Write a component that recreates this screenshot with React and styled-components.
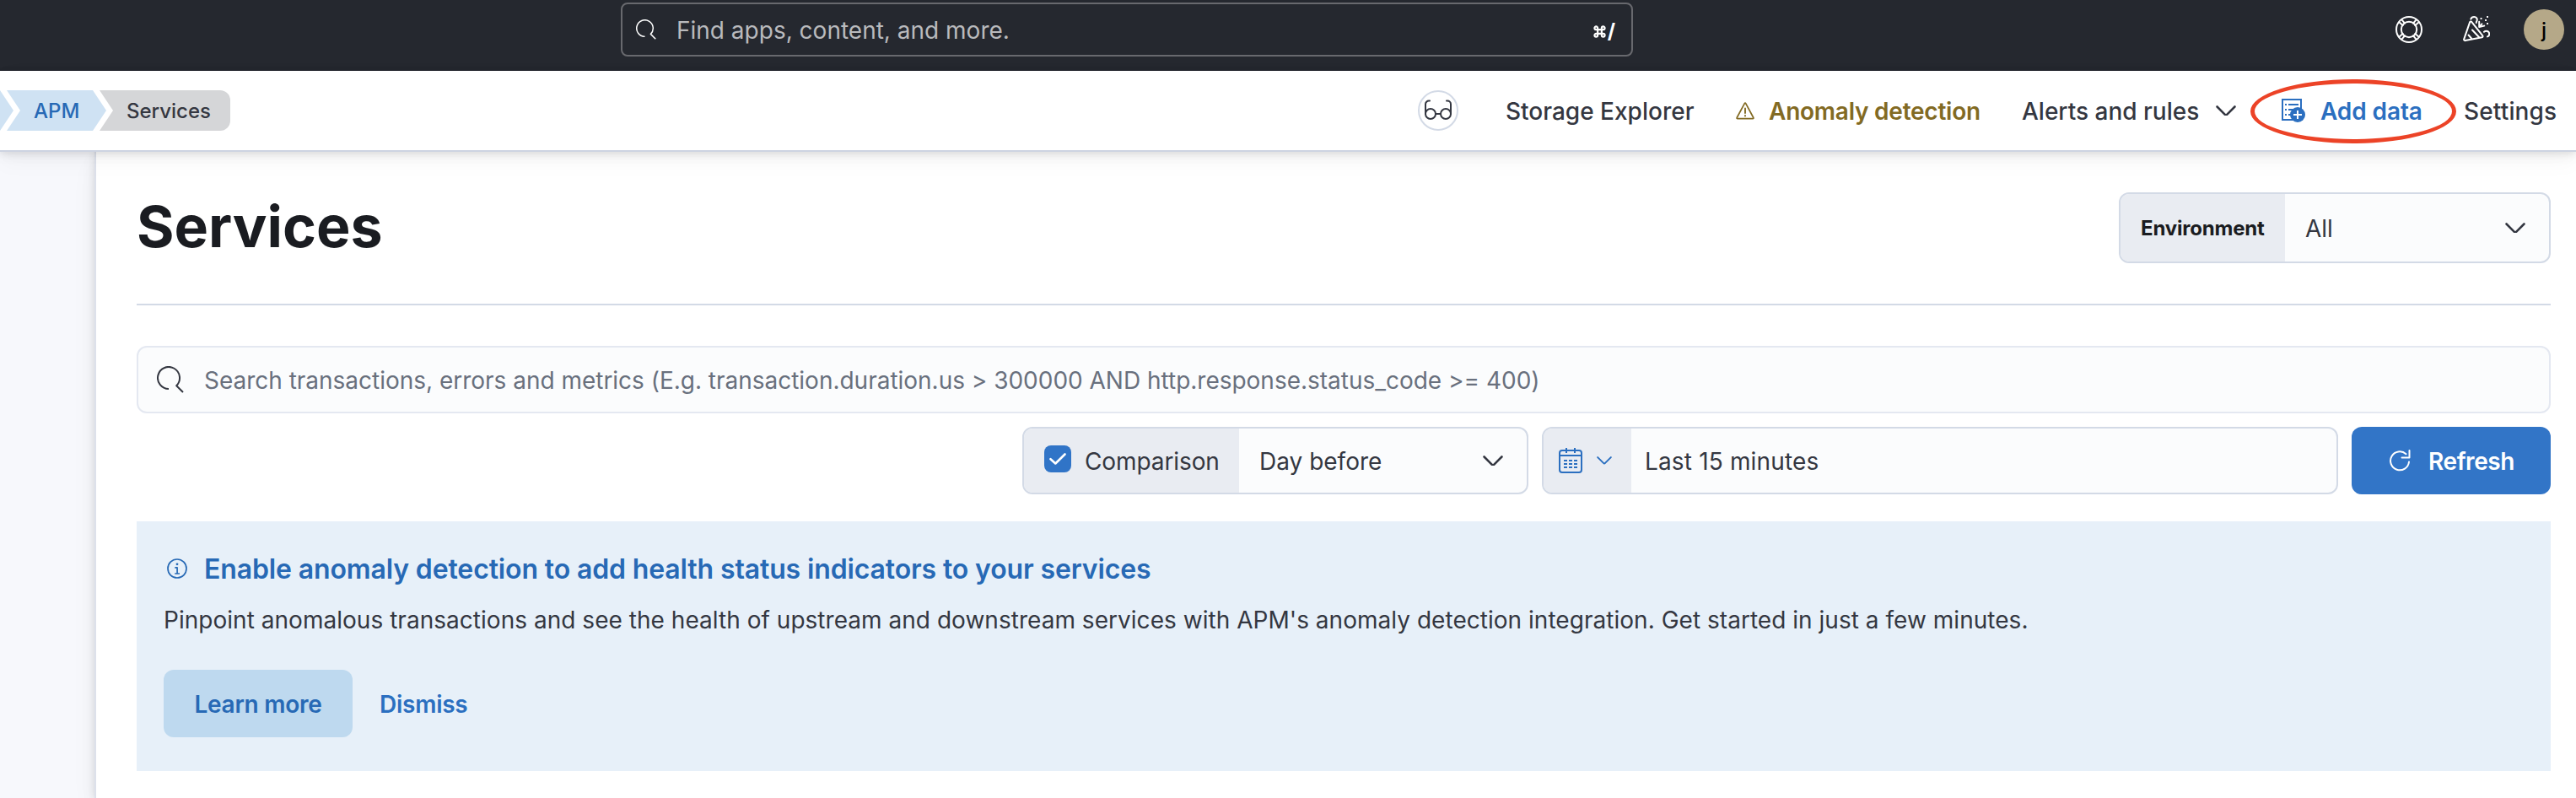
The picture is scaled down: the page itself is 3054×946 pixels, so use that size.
import React from 'react';
import styled, { createGlobalStyle } from 'styled-components';

const GlobalStyle = createGlobalStyle`
  *, *::before, *::after { box-sizing: border-box; }
  body {
    margin: 0;
    background: #fff;
    color: #343741;
    font-family: Inter, "Liberation Sans", sans-serif;
    font-size: 28px;
    line-height: 40px;
    overflow: hidden;
  }
`;

const Page = styled.div`
  display: flex;
  flex-direction: column;
  width: 3054px;
  height: 946px;
  overflow: hidden;
`;

const Label = styled.span`
  display: block;
  padding-top: 2px;
  letter-spacing: ${(p) => p.$ls || 0}px;
  white-space: nowrap;
`;

const TopBar = styled.header`
  flex: none;
  display: flex;
  align-items: flex-start;
  height: 84px;
  padding: 3px 14px 0 736px;
  background: #25282f;
`;

const GlobalSearch = styled.div`
  display: flex;
  align-items: center;
  width: 1200px;
  height: 64px;
  padding: 0 19px 0 16px;
  border: 2px solid #68696e;
  border-radius: 8px;
  color: #fff;
`;

const GlobalSearchText = styled(Label)`
  flex: 1;
  margin-left: 24px;
  color: #b9babd;
`;

const Shortcut = styled.kbd`
  display: flex;
  align-items: center;
  gap: 2px;
  font-family: Inter, sans-serif;
  font-size: 24px;
  font-weight: 700;
  line-height: 32px;
  margin-top: 4px;
`;

const TopActions = styled.div`
  display: flex;
  align-items: center;
  gap: 48px;
  height: 64px;
  margin-left: auto;
  color: #fff;
`;

const Avatar = styled.div`
  display: flex;
  align-items: center;
  justify-content: center;
  width: 48px;
  height: 48px;
  margin-left: -8px;
  border-radius: 50%;
  background: #b5a888;
  color: #000;
  font-size: 24px;
  font-weight: 500;
`;

const NavBar = styled.nav`
  position: relative;
  z-index: 2;
  flex: none;
  display: flex;
  align-items: center;
  justify-content: space-between;
  height: 96px;
  padding: 0 23px 0 0;
  background: #fff;
  border-bottom: 2px solid #cdd3e1;
  box-shadow: 0 2px 8px rgba(0, 0, 0, 0.08), 0 5px 14px rgba(0, 0, 0, 0.05), 0 10px 28px rgba(0, 0, 0, 0.04);
`;

const Crumbs = styled.div`
  display: flex;
`;

const Crumb = styled.div`
  display: flex;
  align-items: center;
  width: ${(p) => p.$width}px;
  height: 48px;
  margin-left: ${(p) => (p.$first ? 0 : -8)}px;
  padding-left: ${(p) => (p.$first ? 0 : 32)}px;
  background: ${(p) => (p.$last ? '#d5d6d8' : '#cfe2f3')};
  color: ${(p) => (p.$last ? '#343741' : '#2769b5')};
  border-radius: ${(p) => (p.$last ? '0 12px 12px 0' : 0)};
  clip-path: ${(p) =>
    p.$first
      ? 'polygon(0 0, 100% 50%, 0 100%)'
      : p.$last
        ? 'polygon(0 0, 100% 0, 100% 100%, 0 100%, 16px 50%)'
        : 'polygon(0 0, calc(100% - 16px) 0, 100% 50%, calc(100% - 16px) 100%, 0 100%, 16px 50%)'};
  font-size: 24px;
  font-weight: 500;
`;

const NavLinks = styled.div`
  display: flex;
  align-items: center;
`;

const ReadOnlyBadge = styled.div`
  display: flex;
  align-items: center;
  justify-content: center;
  width: 48px;
  height: 48px;
  margin-right: 56px;
  border: 2px solid #d3dae6;
  border-radius: 50%;
`;

const NavLink = styled.a`
  position: relative;
  display: flex;
  align-items: center;
  width: ${(p) => p.$width}px;
  color: ${(p) => p.$color || '#343741'};
  font-weight: ${(p) => (p.$color ? 600 : 500)};
  white-space: nowrap;

  & > svg { flex: none; }
`;

const Slot = styled.span`
  display: flex;
  flex: none;
  width: ${(p) => p.$width}px;
`;

const Highlight = styled.div`
  position: absolute;
  left: -37px;
  top: -16px;
  width: 244px;
  height: 76px;
  border: 5px solid #ec4327;
  border-radius: 50%;
`;

const Body = styled.div`
  flex: 1;
  display: flex;
  min-height: 0;
`;

const SideGutter = styled.aside`
  flex: none;
  width: 112px;
  background: #f7f8fc;
`;

const Main = styled.main`
  flex: 1;
  display: flex;
  flex-direction: column;
  padding: 48px 30px 0 48px;
  background: #fff;
  border-left: 2px solid #dde1eb;
  box-shadow: 0 0 8px rgba(0, 0, 0, 0.09), 0 6px 18px rgba(0, 0, 0, 0.06), 0 14px 32px rgba(0, 0, 0, 0.04);
`;

const TitleRow = styled.div`
  display: flex;
  justify-content: space-between;
  height: 134px;
  border-bottom: 2px solid #d3dae6;
`;

const Title = styled.h1`
  margin: 0;
  color: #1a1c21;
  font-size: 68px;
  font-weight: 700;
  line-height: 80px;
`;

const Control = styled.div`
  display: flex;
  width: ${(p) => p.$width}px;
  height: ${(p) => p.$height || 80}px;
  overflow: hidden;
  border: 2px solid #d3dae6;
  border-radius: 12px;
  background: #fbfcfd;
`;

const Prepend = styled.div`
  flex: none;
  display: flex;
  align-items: center;
  width: ${(p) => p.$width}px;
  padding-left: ${(p) => p.$pad}px;
  background: #e9ecf2;
  color: ${(p) => p.$color || '#343741'};
`;

const PrependLabel = styled(Label)`
  color: #1a1c21;
  font-size: 24px;
  font-weight: 700;
`;

const Value = styled.div`
  flex: 1;
  display: flex;
  align-items: center;
  justify-content: space-between;
  padding: 0 ${(p) => p.$right || 28}px 0 ${(p) => p.$left || 24}px;
`;

const SearchField = styled.div`
  display: flex;
  align-items: center;
  gap: 24px;
  height: 80px;
  margin-top: 48px;
  padding-left: 22px;
  border: 2px solid #e4e8f1;
  border-radius: 12px;
  background: #fbfcfd;
  color: #343741;
`;

const Placeholder = styled(Label)`
  color: #69707d;
`;

const FilterRow = styled.div`
  display: flex;
  justify-content: flex-end;
  gap: 16px;
  margin-top: 16px;
`;

const CheckBox = styled.span`
  display: flex;
  align-items: center;
  justify-content: center;
  width: 32px;
  height: 32px;
  margin: -4px 16px 0 0;
  border-radius: 8px;
  background: #3074c7;
  color: #fff;
`;

const Button = styled.button`
  display: flex;
  align-items: center;
  justify-content: center;
  width: ${(p) => p.$width}px;
  height: 80px;
  padding: 0 0 0 ${(p) => (p.$fill ? 2 : 0)}px;
  border: 0;
  border-radius: 12px;
  background: ${(p) => (p.$fill ? '#3275c7' : '#bed9ef')};
  color: ${(p) => (p.$fill ? '#fff' : '#2769b5')};
  font: inherit;
  font-weight: 600;
  gap: 21px;
`;

const LinkButton = styled.button`
  padding: 0;
  border: 0;
  background: none;
  color: #2b6fc0;
  font: inherit;
  font-weight: 600;
`;

const Callout = styled.section`
  height: 296px;
  margin-top: 32px;
  padding: 32px;
  background: #e7f0f9;
`;

const CalloutTitle = styled.h2`
  display: flex;
  align-items: center;
  gap: 20px;
  height: 48px;
  margin: 0;
  padding-left: 4px;
  color: #2769b5;
  font-size: 32px;
  font-weight: 600;
`;

const CalloutText = styled.p`
  display: flex;
  margin: 15px 0 0;
`;

const CalloutActions = styled.div`
  display: flex;
  align-items: center;
  gap: 32px;
  margin-top: 39px;
`;

const Stroked = ({ size, height, box = '0 0 16 16', width = 1, children }) => (
  <svg
    width={size}
    height={height || size}
    viewBox={box}
    fill="none"
    stroke="currentColor"
    strokeWidth={width}
    strokeLinecap="round"
    strokeLinejoin="round"
  >
    {children}
  </svg>
);

const SearchIcon = ({ size }) => (
  <Stroked size={size}>
    <path d="M7 13.5A6.5 6.5 0 1 1 11.6 11.6L15.5 15.5" strokeLinecap="butt" />
  </Stroked>
);

const Chevron = ({ size = 24, width = 2.6 }) => (
  <Stroked size={size} height={size * 0.54} box="0 0 24 13" width={width}>
    <path d="M1.5 1.5 10.6 10.6a2 2 0 0 0 2.8 0L22.5 1.5" />
  </Stroked>
);

const CommandIcon = () => (
  <Stroked size={15} width={2.3}>
    <path d="M5.5 5.5V3.5a2 2 0 1 0-2 2h9a2 2 0 1 0-2-2v9a2 2 0 1 0 2-2h-9a2 2 0 1 0 2 2z" />
  </Stroked>
);

const HelpIcon = () => (
  <Stroked size={32} box="0 0 32 32" width={2}>
    <circle cx="16" cy="16" r="15" />
    <circle cx="16" cy="16" r="9.2" />
    <path d="M4.6 7.6 8.6 11M7.6 4.6 11 8.6M24.4 4.6 21 8.6M27.4 7.6 23.4 11M4.6 24.4 8.6 21M7.6 27.4 11 23.4M24.4 27.4 21 23.4M27.4 24.4 23.4 21" />
  </Stroked>
);

const CheerIcon = () => (
  <Stroked size={32} box="0 0 32 32" width={2}>
    <path d="M8.2 7.2 1.2 27.4a1.3 1.3 0 0 0 1.5 1.7L22.6 25.2a1.2 1.2 0 0 0 .6-2L10.2 6.8a1.2 1.2 0 0 0-2 .4z" />
    <path d="M6.5 22.5l3.5 4M11 16.5l8 8.5M9.3 3.6C10 1.8 11.4 1 13.2 1c2.6 0 4.2 2 3.4 4.4-.4 1-1 1.6-.8 2.6" />
    <path d="M19.2 6.8V13l6-1.4M19.4 12.8l3-3.4M25 18.8c2.6-2.2 6-.8 6.2 2.2.1 1.8-.6 3-2.2 3.4" />
    <path d="M21.5 3h.1M27 5h.1M29 1h.1M29 9h.1" strokeLinecap="square" strokeWidth="1.8" />
  </Stroked>
);

const GlassesIcon = () => (
  <Stroked size={34} height={26} box="0 0 34 26" width={2}>
    <circle cx="8" cy="17" r="6" />
    <circle cx="26" cy="17" r="6" />
    <path d="M14 17h6M2 17V5.5a4 4 0 0 1 4-4h1M32 17V5.5a4 4 0 0 0-4-4h-1" />
  </Stroked>
);

const WarningIcon = () => (
  <Stroked size={22} height={21} box="0 0 22 21" width={1.7}>
    <path d="M10.3 1.6 1.2 18.5a.8.8 0 0 0 .7 1.2h18.2a.8.8 0 0 0 .7-1.2L11.7 1.6a.8.8 0 0 0-1.4 0z" />
    <path d="M11 7.5v5.5M11 16v.6" strokeWidth="1.9" />
  </Stroked>
);

const IndexAddIcon = () => (
  <svg width="28" height="28" viewBox="0 0 28 28" fill="none" stroke="currentColor" strokeWidth="2">
    <path d="M1 1h22v24H1z" />
    <path d="M4 7h2M8 7h12M4 13h2M8 13h8M4 19h2M8 19h3" />
    <circle cx="19" cy="19" r="9" fill="currentColor" stroke="none" />
    <path d="M19 14v10M14 19h10" stroke="#fff" />
  </svg>
);

const CalendarIcon = () => (
  <Stroked size={28} height={30} box="0 0 28 30" width={2}>
    <rect x="1" y="3" width="26" height="26" rx="3" />
    <path d="M1 9h26M9 0v6M19 0v6" strokeLinecap="butt" />
    <path d="M6 15h16M6 19h16M6 23h16" strokeLinecap="butt" strokeDasharray="4 2" />
  </Stroked>
);

const CheckIcon = () => (
  <Stroked size={20} height={14} box="0 0 20 14" width={2.6}>
    <path d="M1.5 7.2 7.3 12.5 18.5 1.5" />
  </Stroked>
);

const RefreshIcon = () => (
  <Stroked size={25} height={27} box="0 0 25 27" width={2}>
    <path d="M19.5 5.2A11 11 0 1 0 23 14.5" />
    <path d="M23.5 1v8.5h-9" />
  </Stroked>
);

const InfoIcon = () => (
  <Stroked size={24} box="0 0 24 24" width={1.7}>
    <circle cx="12" cy="12" r="11" />
    <path d="M9.3 10.8h2.8v7M9.2 18h5.8" strokeLinecap="butt" />
    <circle cx="12" cy="6.8" r="1.4" fill="currentColor" stroke="none" />
  </Stroked>
);

export default function App() {
  return (
    <Page>
      <GlobalStyle />
      <TopBar>
        <GlobalSearch>
          <SearchIcon size={24} />
          <GlobalSearchText>Find apps, content, and more.</GlobalSearchText>
          <Shortcut>
            <CommandIcon />/
          </Shortcut>
        </GlobalSearch>
        <TopActions>
          <HelpIcon />
          <CheerIcon />
          <Avatar>
            <Label>j</Label>
          </Avatar>
        </TopActions>
      </TopBar>

      <NavBar>
        <Crumbs>
          <Crumb $first $width={16} />
          <Crumb $width={118}>
            <Label>APM</Label>
          </Crumb>
          <Crumb $last $width={155}>
            <Label>Services</Label>
          </Crumb>
        </Crumbs>
        <NavLinks>
          <ReadOnlyBadge>
            <GlassesIcon />
          </ReadOnlyBadge>
          <NavLink $width={273}>
            <Label>Storage Explorer</Label>
          </NavLink>
          <NavLink $width={339} $color="#826a23">
            <Slot $width={39}>
              <WarningIcon />
            </Slot>
            <Label $ls={-0.23}>Anomaly detection</Label>
          </NavLink>
          <NavLink $width={308}>
            <Slot $width={230}>
              <Label>Alerts and rules</Label>
            </Slot>
            <Chevron />
          </NavLink>
          <NavLink $width={216} $color="#2b6fc0">
            <Slot $width={46}>
              <IndexAddIcon />
            </Slot>
            <Label $ls={-0.1}>Add data</Label>
            <Highlight />
          </NavLink>
          <NavLink $width={110}>
            <Label $ls={0.15}>Settings</Label>
          </NavLink>
        </NavLinks>
      </NavBar>

      <Body>
        <SideGutter />
        <Main>
          <TitleRow>
            <Title>Services</Title>
            <Control $width={512} $height={84}>
              <Prepend $width={195} $pad={24}>
                <PrependLabel $ls={-0.2}>Environment</PrependLabel>
              </Prepend>
              <Value>
                <Label>All</Label>
                <Chevron />
              </Value>
            </Control>
          </TitleRow>

          <SearchField>
            <SearchIcon size={32} />
            <Placeholder $ls={-0.015}>
              Search transactions, errors and metrics (E.g. transaction.duration.us &gt; 300000 AND
              http.response.status_code &gt;= 400)
            </Placeholder>
          </SearchField>

          <FilterRow>
            <Control $width={600}>
              <Prepend $width={255} $pad={24}>
                <CheckBox>
                  <CheckIcon />
                </CheckBox>
                <Label $ls={-0.1}>Comparison</Label>
              </Prepend>
              <Value>
                <Label>Day before</Label>
                <Chevron />
              </Value>
            </Control>
            <Control $width={944}>
              <Prepend $width={104} $pad={18} $color="#2b6fc0">
                <Slot $width={45}>
                  <CalendarIcon />
                </Slot>
                <Chevron size={18} />
              </Prepend>
              <Value $left={16}>
                <Label $ls={0.16}>Last 15 minutes</Label>
              </Value>
            </Control>
            <Button $fill $width={236}>
              <RefreshIcon />
              <Label $ls={-0.45}>Refresh</Label>
            </Button>
          </FilterRow>

          <Callout>
            <CalloutTitle>
              <InfoIcon />
              <Label $ls={-0.13}>Enable anomaly detection to add health status indicators to your services</Label>
            </CalloutTitle>
            <CalloutText>
              <Label $ls={0.03}>
                Pinpoint anomalous transactions and see the health of upstream and downstream services with
                APM's anomaly detection integration. Get started in just a few minutes.
              </Label>
            </CalloutText>
            <CalloutActions>
              <Button $width={224}>
                <Label $ls={-0.25}>Learn more</Label>
              </Button>
              <LinkButton>
                <Label $ls={-0.25}>Dismiss</Label>
              </LinkButton>
            </CalloutActions>
          </Callout>
        </Main>
      </Body>
    </Page>
  );
}
